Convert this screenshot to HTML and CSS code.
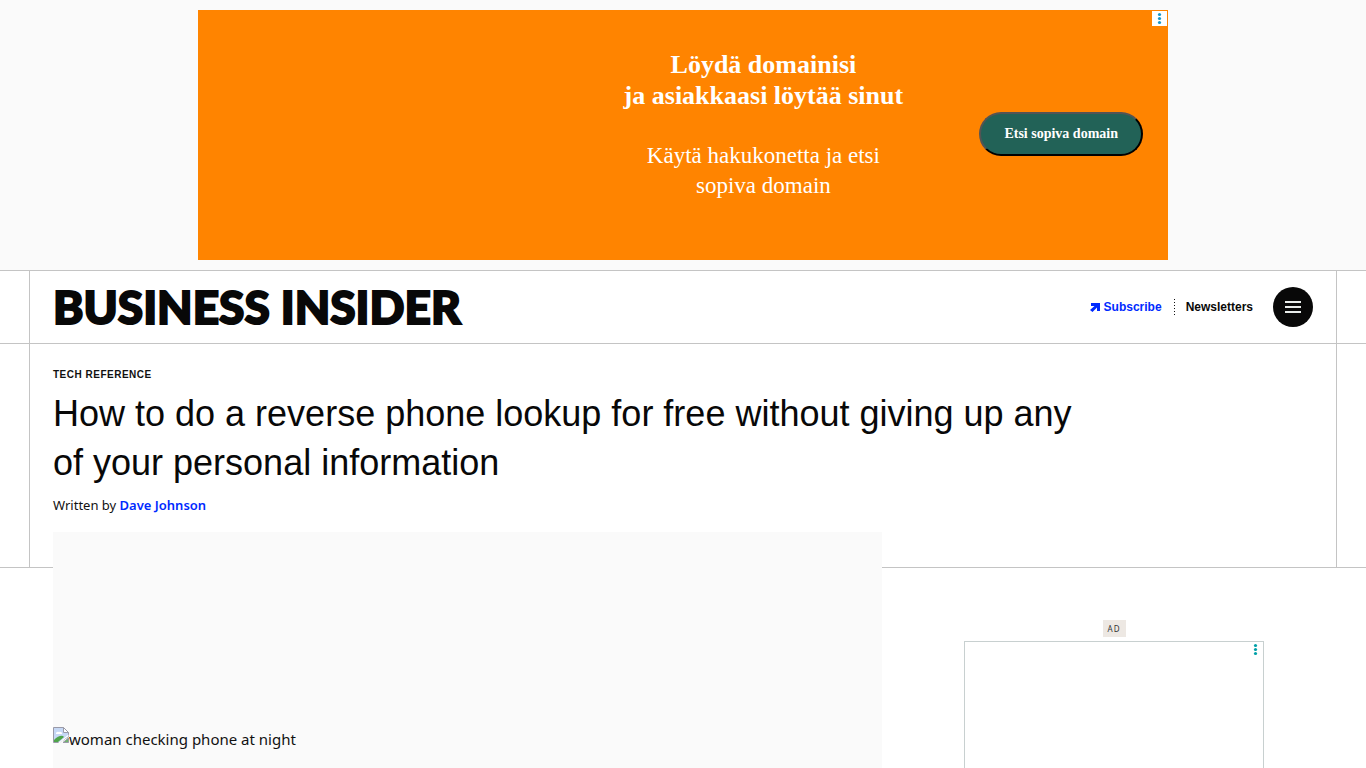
FILE: index.html
```html
<!DOCTYPE html>
<html lang="en">
  <head>
    <meta charset="UTF-8" />
    <meta name="viewport" content="width=device-width, initial-scale=1.0" />
    <title>How to do a reverse phone lookup for free</title>
    <link rel="stylesheet" href="styles.css">
  </head>

  <body>
    <section class="top-ad">
      <div class="banner" lang="fi">
        <div class="banner-text">
          <h2>Löydä domainisi <br>ja asiakkaasi löytää sinut</h2>
          <p>Käytä hakukonetta ja etsi sopiva domain</p>
        </div>
        <button class="banner-button">Etsi sopiva domain</button>
        <button class="ad-choices" aria-label="Ad options">
          <svg width="15" height="15" viewBox="0 0 15 15" fill="#1496c8">
            <circle cx="7.5" cy="3.5" r="1.6" />
            <circle cx="7.5" cy="7.5" r="1.6" />
            <circle cx="7.5" cy="11.5" r="1.6" />
          </svg>
        </button>
      </div>
    </section>

    <header class="masthead">
      <div class="frame masthead-row">
        <a href="#" class="logo">BUSINESS INSIDER</a>
        <nav class="links">
          <a href="#" class="subscribe">
            <svg width="10" height="10" viewBox="0 0 10 10" fill="#002aff">
              <path d="M1 1h9v8H7V5.500L2.500 10 0 8 4.500 4H1z" />
            </svg>
            Subscribe
          </a>
          <a href="#" class="newsletters">Newsletters</a>
          <button class="menu" aria-label="Menu">
            <svg width="16" height="12" viewBox="0 0 16 12" fill="#e8ecea">
              <path d="M0 0h16v2H0zM0 5h16v2H0zM0 10h16v2H0z" />
            </svg>
          </button>
        </nav>
      </div>
    </header>

    <section class="hero">
      <div class="frame hero-text">
        <a href="#" class="category">Tech Reference</a>
        <h1>How to do a reverse phone lookup for free without giving up any of your personal information</h1>
        <p class="byline">Written by <a href="#">Dave Johnson</a></p>
      </div>
    </section>

    <main class="content">
      <figure class="photo">
        <div class="photo-alt">
          <svg width="16" height="16" viewBox="0 0 16 16">
            <path d="M.500.500h10l5 5v4l-9 6h-6z" fill="#c6d8f5" stroke="#9a9aa8" />
            <path d="M10.500.500v5h5z" fill="#fff" stroke="#9a9aa8" />
            <path d="M3 7a2 2 0 0 1 3-2 2 2 0 0 1 3 2z" fill="#fff" />
            <path d="M1 15v-2q5-5 9-4l1 1-6 5z" fill="#4ea54a" />
            <path d="M5 16 15.500 7.500V9L7 16z" fill="#fff" />
            <path d="M10 15.500h5.500V11z" fill="#6fb56c" stroke="#9a9aa8" />
          </svg>
          <span>woman checking phone at night</span>
        </div>
      </figure>
      <aside class="side">
        <span class="ad-label">AD</span>
        <div class="side-ad">
          <button class="ad-choices" aria-label="Ad options">
            <svg width="15" height="15" viewBox="0 0 15 15" fill="#00a0a8">
              <circle cx="7.5" cy="3.5" r="1.6" />
              <circle cx="7.5" cy="7.5" r="1.6" />
              <circle cx="7.5" cy="11.5" r="1.6" />
            </svg>
          </button>
        </div>
      </aside>
    </main>
  </body>
</html>
```
FILE: styles.css
```css
* {
  box-sizing: border-box;
}

body {
  margin: 0;
  height: 100vh;
  overflow: hidden;
  font-family: "Noto Sans", "Open Sans", sans-serif;
  color: #111;
  background-color: #fff;
}

h1,
h2,
p,
figure {
  margin: 0;
}

a {
  color: #002aff;
  text-decoration: none;
}

button {
  cursor: pointer;
}

svg {
  display: block;
}

.top-ad {
  padding: 10px;
  background-color: #fafafa;
}

.banner {
  position: relative;
  display: flex;
  align-items: center;
  justify-content: flex-end;
  gap: 48px;
  max-width: 970px;
  height: 250px;
  margin: 0 auto;
  padding: 0 25px 2px;
  background-color: #ff8400;
  color: #fff;
  font-family: "Liberation Serif", serif;
  text-align: center;
}

.banner-text {
  width: 336px;
  padding-bottom: 18px;
}

.banner-text h2 {
  margin-bottom: 30px;
  font-size: 26px;
  line-height: 31px;
}

.banner-text p {
  padding: 0 48px;
  font-size: 23px;
  line-height: 30px;
}

.banner-button {
  padding: 12px 23px;
  border: 2px outset #000;
  border-radius: 22px;
  background-color: #226257;
  color: #fff;
  font-family: "Liberation Serif", serif;
  font-size: 14px;
  font-weight: bold;
  line-height: 16px;
}

.ad-choices {
  position: absolute;
  top: 1px;
  right: 1px;
  padding: 0;
  border: none;
  background-color: #fff;
}

.masthead,
.hero {
  padding: 0 29px;
  border-top: 1px solid #c4c4c4;
}

.hero {
  border-bottom: 1px solid #c4c4c4;
}

.frame {
  padding: 0 23px;
  border: solid #c4c4c4;
  border-width: 0 1px;
}

.masthead-row {
  display: flex;
  align-items: center;
  justify-content: space-between;
  height: 72px;
}

.logo {
  color: #080808;
  font-family: Lato, sans-serif;
  font-size: 46px;
  font-weight: 900;
  line-height: 48px;
  -webkit-text-stroke: 2px #080808;
}

.links {
  display: flex;
  align-items: center;
  font-family: "Liberation Sans", sans-serif;
  font-size: 12px;
  font-weight: bold;
  line-height: 16px;
}

.subscribe {
  display: flex;
  align-items: center;
  gap: 4px;
  padding-right: 12px;
}

.newsletters {
  padding-left: 12px;
  background: repeating-linear-gradient(#111 0 1px, transparent 1px 3px) left / 1px 100% no-repeat;
  color: #080808;
}

.menu {
  display: flex;
  align-items: center;
  justify-content: center;
  width: 40px;
  height: 40px;
  margin-left: 20px;
  padding: 0;
  border: none;
  border-radius: 50%;
  background-color: #080808;
}

.hero-text {
  padding-top: 24px;
  padding-bottom: 52px;
}

.category {
  display: block;
  margin-bottom: 7px;
  color: #111;
  font-family: "Liberation Sans", sans-serif;
  font-size: 10px;
  font-weight: bold;
  letter-spacing: 0.05em;
  line-height: 14px;
  text-transform: uppercase;
}

.hero h1 {
  max-width: 1050px;
  margin-bottom: 8px;
  color: #080808;
  font-family: "Liberation Sans", sans-serif;
  font-size: 36px;
  font-weight: normal;
  line-height: 49px;
}

.byline {
  font-size: 13px;
  line-height: 20px;
}

.byline a {
  font-weight: 600;
}

.content {
  display: grid;
  grid-template-columns: 25fr 12fr;
  gap: 33px;
  align-items: start;
  padding: 0 53px;
}

.photo {
  position: relative;
  display: flex;
  align-items: center;
  aspect-ratio: 2 / 1;
  margin-top: -36px;
  background-color: #fafafa;
}

.photo-alt {
  display: flex;
  align-items: flex-start;
  font-size: 15px;
  line-height: 24px;
}

.side {
  display: flex;
  flex-direction: column;
  align-items: center;
  gap: 4px;
  padding-top: 52px;
}

.ad-label {
  padding: 0 5px;
  background-color: #ede8e3;
  color: #333;
  font-size: 8px;
  letter-spacing: 1px;
  line-height: 17px;
}

.side-ad {
  position: relative;
  width: 300px;
  height: 600px;
  border: 1px solid #c8d0d0;
}

.side-ad .ad-choices {
  top: 0;
  right: 0;
}
```
